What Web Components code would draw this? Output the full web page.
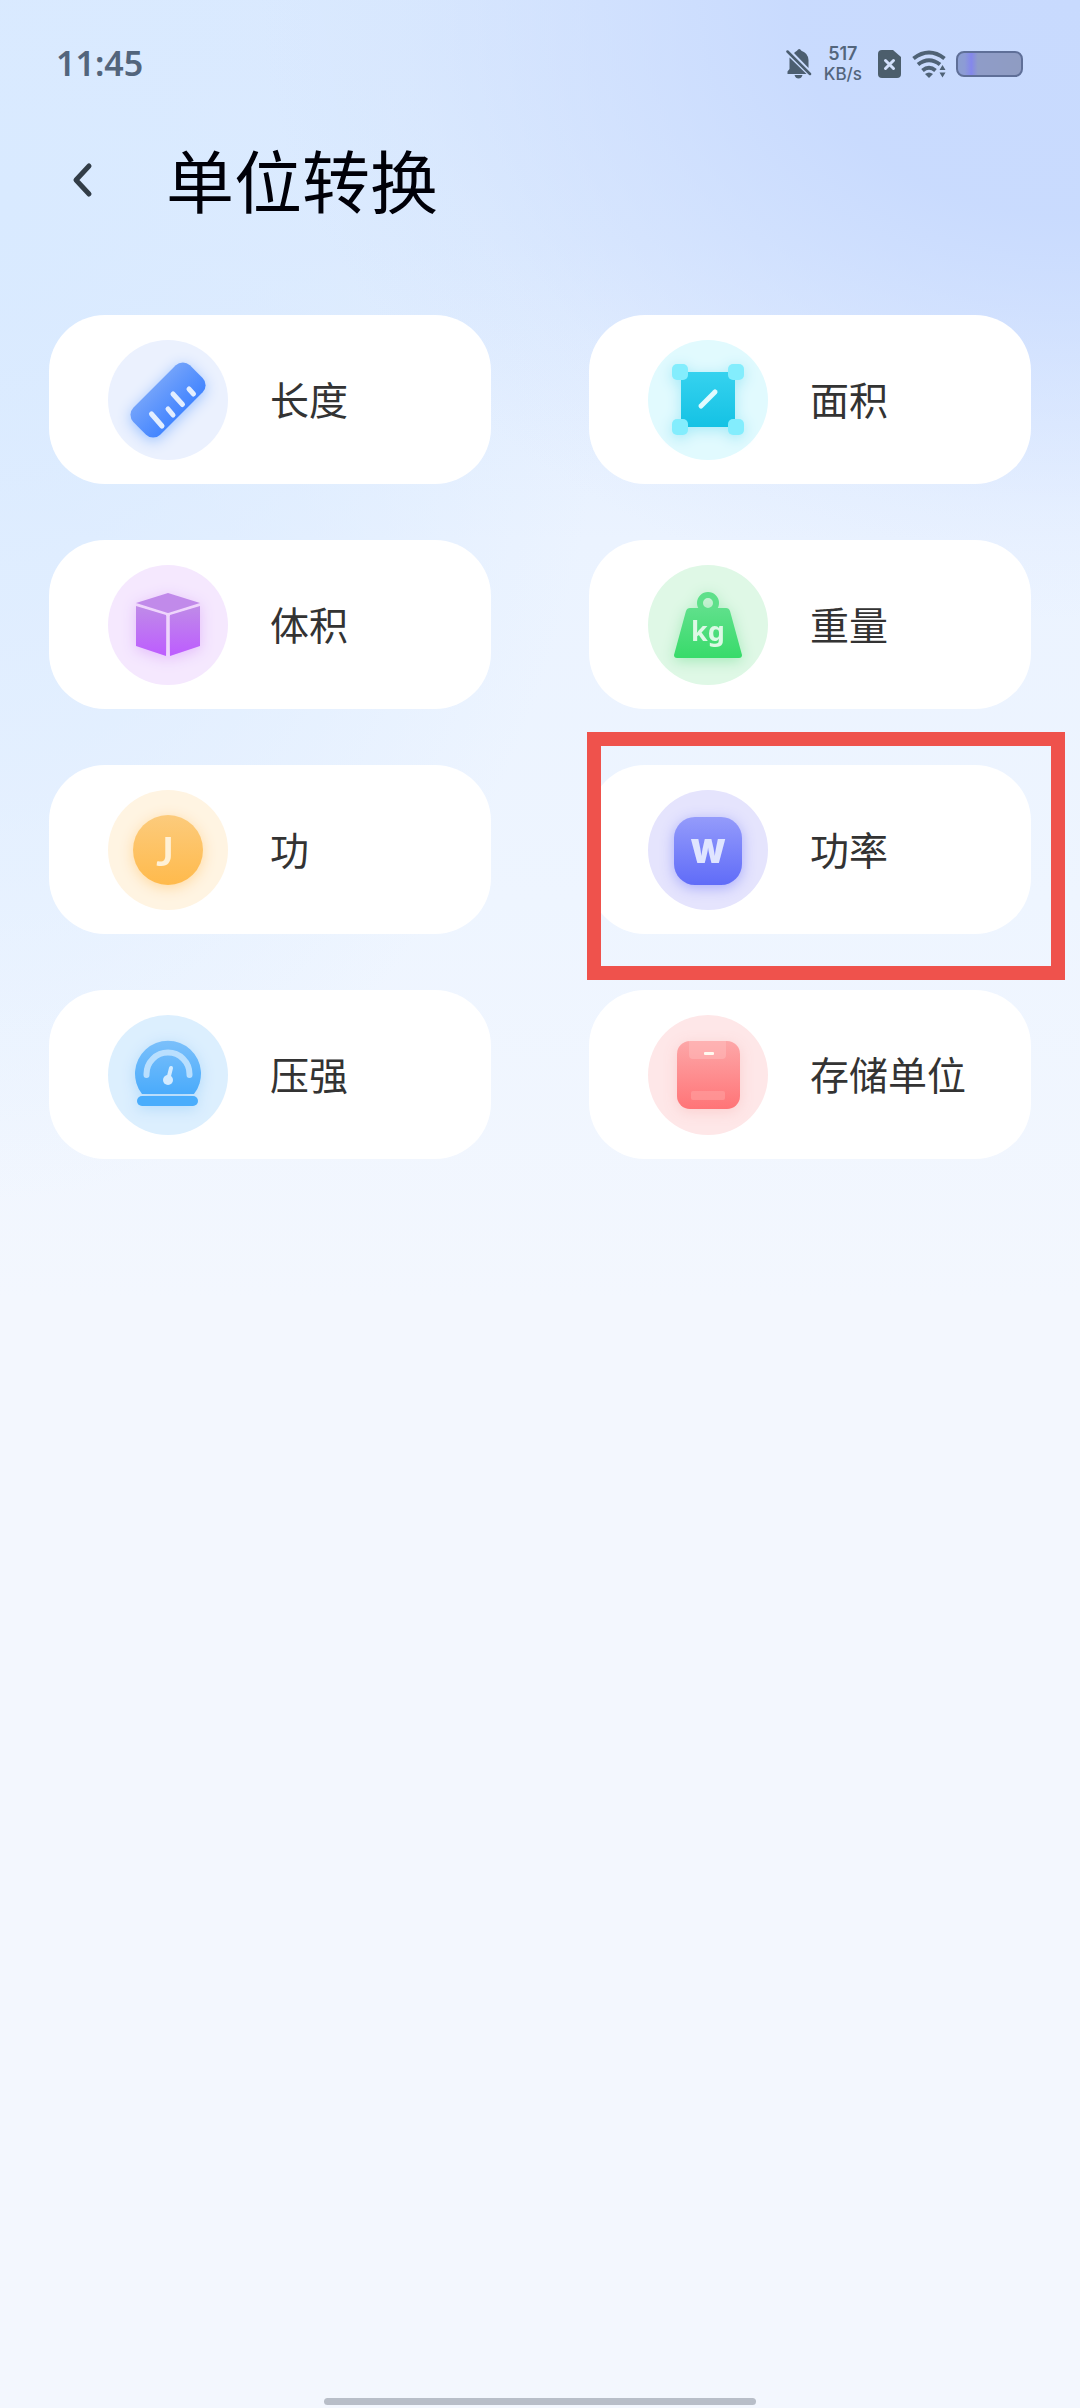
<!DOCTYPE html>
<html lang="zh-CN">
<head>
<meta charset="UTF-8">
<meta name="viewport" content="width=device-width, initial-scale=1">
<title>单位转换</title>
<style>
  html {
    height: 100%;
  }
  body {
    margin: 0;
    min-height: 100%;
    display: flex;
    font-family: "Noto Sans", "Noto Sans CJK SC", sans-serif;
    color: #333;
    background: #f3f7fe;
  }
</style>
</head>
<body>
<unit-page>
  <status-bar slot="status" time="11:45" speed="517" unit="KB/s"></status-bar>
  <page-header slot="header">单位转换</page-header>
  <unit-card icon="length" href="#length">长度</unit-card>
  <unit-card icon="area" href="#area">面积</unit-card>
  <unit-card icon="volume" href="#volume">体积</unit-card>
  <unit-card icon="weight" href="#weight">重量</unit-card>
  <unit-card icon="work" href="#work">功</unit-card>
  <unit-card icon="power" href="#power" marked>功率</unit-card>
  <unit-card icon="pressure" href="#pressure">压强</unit-card>
  <unit-card icon="storage" href="#storage">存储单位</unit-card>
</unit-page>

<script>
// Each icon is drawn in a 120x120 box: disc colour, shadow colour, gradient and shapes
const ICONS = {
  length: {
    disc: "#ebf1fe",
    shadow: "#9cc2ff",
    from: "#72a2fb",
    to: "#4385ff",
    shapes: `
      <rect x="20" y="41" width="80" height="38" rx="10" transform="rotate(-45 60 60)" fill="url(#g)"/>
      <path d="M43.500 74l10.500 12M60 69l5 6M65 54l9.500 10.500M81 49l4.500 5" fill="none" stroke="#e3eeff" stroke-width="5" stroke-linecap="round"/>`
  },
  area: {
    disc: "#e1fafe",
    shadow: "#a5e9f7",
    from: "#36d2ef",
    to: "#14c2e4",
    shapes: `
      <rect x="33" y="32" width="54" height="55" fill="url(#g)"/>
      <g fill="#83edfd">
        <rect x="24" y="24" width="16" height="16" rx="5"/>
        <rect x="80" y="24" width="16" height="16" rx="5"/>
        <rect x="24" y="79" width="16" height="16" rx="5"/>
        <rect x="80" y="79" width="16" height="16" rx="5"/>
      </g>
      <path d="M53 66l14-14" stroke="#e1fbff" stroke-width="5" stroke-linecap="round"/>`
  },
  volume: {
    disc: "#f5e8fe",
    shadow: "#e3bcfb",
    from: "#bf8be8",
    to: "#bd5cff",
    shapes: `
      <path d="M28 38l32 10 32-10v3l-31 10v40h-2V51L28 41z" fill="#efd5fc"/>
      <path d="M60 28l32 10-32 10-32-10z" fill="#c18aea"/>
      <path d="M28 41l30 9v41l-30-10z" fill="url(#g)"/>
      <path d="M92 41l-30 9v41l30-10z" fill="url(#g)"/>`
  },
  weight: {
    disc: "#dff8e6",
    shadow: "#a4e9b9",
    from: "#5fe08b",
    to: "#38db6a",
    shapes: `
      <circle cx="60" cy="38" r="8" fill="none" stroke="#5ee08a" stroke-width="6"/>
      <path d="M42 43h36q3 0 4 3l12 44q0 3-3 3H29q-3 0-3-3l12-44q1-3 4-3z" fill="url(#g)"/>
      <text x="60" y="76" font-family="Noto Sans, sans-serif" font-size="27" font-weight="700" text-anchor="middle" fill="#dcf9e5">kg</text>`
  },
  work: {
    disc: "#fff4e2",
    shadow: "#ffd9a0",
    from: "#fccb7c",
    to: "#ffba4c",
    shapes: `
      <circle cx="60" cy="60" r="35" fill="url(#g)"/>
      <text x="57" y="76" font-family="Lato, sans-serif" font-size="41" font-weight="700" text-anchor="middle" fill="#fff1d6">J</text>`
  },
  power: {
    disc: "#e5e4fd",
    shadow: "#a9acfb",
    from: "#949bfb",
    to: "#606cf8",
    shapes: `
      <rect x="26" y="27" width="68" height="68" rx="21" fill="url(#g)"/>
      <text x="60" y="73" font-family="Inter, sans-serif" font-size="33" font-weight="900" text-anchor="middle" fill="#e0e5ff">W</text>`
  },
  pressure: {
    disc: "#dceffe",
    shadow: "#b3dafb",
    from: "#7bc0fb",
    to: "#4aabfb",
    shapes: `
      <path d="M34 79a33 33 0 1 1 52 0z" fill="url(#g)"/>
      <rect x="29" y="81" width="61" height="10" rx="5" fill="#4aadfc"/>
      <path d="M38.500 60v-1a21.500 21.500 0 0 1 43 0v1" fill="none" stroke="#b9dffe" stroke-width="6" stroke-linecap="round"/>
      <path d="M63 53l-3 12" stroke="#d3ebff" stroke-width="4" stroke-linecap="round"/>
      <circle cx="60" cy="65" r="5" fill="#d3ebff"/>`
  },
  storage: {
    disc: "#fee7e8",
    shadow: "#fbcfcf",
    from: "#fda7a8",
    to: "#ff7477",
    shapes: `
      <rect x="29" y="26" width="63" height="68" rx="13" fill="url(#g)"/>
      <path d="M41 26h37v14q0 4-4 4H45q-4 0-4-4z" fill="#ffc0c0" fill-opacity=".45"/>
      <rect x="56" y="37" width="10" height="3" rx="1" fill="#fffaf0"/>
      <rect x="43" y="76" width="34" height="9" rx="2" fill="#ff9b9b" fill-opacity=".7"/>`
  }
};

class StatusBar extends HTMLElement {
  constructor() {
    super();
    this.attachShadow({ mode: "open" });
  }

  connectedCallback() {
    this.shadowRoot.innerHTML = `
      <style>
        :host {
          display: flex;
          align-items: center;
          justify-content: space-between;
          height: 128px;
          padding: 0 57px 0 56px;
          box-sizing: border-box;
          color: #53657c;
        }
        time {
          padding-bottom: 2px;
          font-size: 34px;
          font-weight: 600;
        }
        .tray {
          display: flex;
          align-items: center;
          gap: 10px;
        }
        .speed {
          display: grid;
          justify-items: center;
          font-family: Inter, sans-serif;
          font-size: 17px;
          line-height: 21px;
          font-weight: 500;
        }
        .speed b {
          font-size: 18px;
          font-weight: 600;
        }
        svg {
          display: block;
        }
      </style>
      <time>${this.getAttribute("time")}</time>
      <div class="tray">
        <svg width="28" height="30" viewBox="0 0 28 30" fill="#4c5e70">
          <path d="M8 4q1.500-1.500 3-2.200Q12 0 13.200 0t2.200 1.800Q22 4 22.500 11v8z"/>
          <path d="M3.500 8.500L20.500 25H1.500v-2.500l2-2.500z"/>
          <path d="M8.500 26h8q-1 3.500-4 3.500t-4-3.500z"/>
          <path d="M1.500 2.500l22.500 22.500" stroke="#4c5e70" stroke-width="2.500" stroke-linecap="round"/>
        </svg>
        <div class="speed">
          <b>${this.getAttribute("speed")}</b>
          <span>${this.getAttribute("unit")}</span>
        </div>
        <svg width="30" height="28" viewBox="0 0 30 28">
          <path d="M10 0h11l8 7v17q0 4-4 4H10q-4 0-4-4V4q0-4 4-4z" fill="#4c5e6c"/>
          <path d="M13.500 10.500l8 8M21.500 10.500l-8 8" stroke="#d3e0fb" stroke-width="3" stroke-linecap="round"/>
        </svg>
        <svg width="34" height="28" viewBox="0 0 34 28" fill="none" stroke="#4f6276" stroke-width="4">
          <path d="M1.500 8.500q15.500-12 31 0"/>
          <path d="M6 14.500q11-8.500 22 0"/>
          <path d="M10.500 20.500q6.500-5.500 13 0"/>
          <path d="M13 24q4-3 8 0l-4 4z" fill="#4f6276" stroke="none"/>
          <path d="M27.500 20l3-5 3 5zM27.500 22.500h6l-3 5z" fill="#4f6276" stroke="none"/>
        </svg>
        <svg width="67" height="26" viewBox="0 0 67 26">
          <defs>
            <linearGradient id="level">
              <stop offset="0" stop-color="#8c9fd0"/>
              <stop offset=".12" stop-color="#8c9bd6"/>
              <stop offset=".22" stop-color="#8487ec"/>
              <stop offset=".32" stop-color="#8f9cc8"/>
              <stop offset="1" stop-color="#8f9cc2"/>
            </linearGradient>
          </defs>
          <rect x="1" y="1" width="65" height="24" rx="7" fill="url(#level)" stroke="#5f6f98" stroke-width="2"/>
        </svg>
      </div>
    `;
  }
}

class PageHeader extends HTMLElement {
  constructor() {
    super();
    this.attachShadow({ mode: "open" });
  }

  connectedCallback() {
    this.shadowRoot.innerHTML = `
      <style>
        :host {
          display: flex;
          align-items: center;
          gap: 60px;
          height: 108px;
          padding: 0 58px;
        }
        button {
          width: 48px;
          height: 48px;
          padding: 0;
          border: none;
          background: none;
          cursor: pointer;
        }
        svg {
          display: block;
        }
        h1 {
          margin: 0;
          padding-bottom: 6px;
          font-family: "Noto Sans CJK SC", sans-serif;
          font-size: 68px;
          line-height: 100px;
          font-weight: 400;
          color: #000008;
        }
      </style>
      <button type="button" aria-label="返回">
        <svg width="48" height="48" viewBox="0 0 48 48" fill="none" stroke="#323d47" stroke-width="5" stroke-linecap="round" stroke-linejoin="round">
          <path d="M31 8L18 22l13 14"/>
        </svg>
      </button>
      <h1><slot></slot></h1>
    `;
  }
}

class UnitIcon extends HTMLElement {
  constructor() {
    super();
    this.attachShadow({ mode: "open" });
  }

  connectedCallback() {
    const icon = ICONS[this.getAttribute("name")];

    this.shadowRoot.innerHTML = `
      <style>
        :host {
          display: block;
          flex: none;
          width: 120px;
          height: 120px;
          border-radius: 50%;
          background: ${icon.disc};
        }
        svg {
          display: block;
        }
        .shape {
          filter: drop-shadow(0 3px 7px ${icon.shadow});
        }
      </style>
      <svg width="120" height="120" viewBox="0 0 120 120" aria-hidden="true">
        <defs>
          <linearGradient id="g" x1="0" y1="0" x2="0" y2="1">
            <stop offset="0" stop-color="${icon.from}"/>
            <stop offset="1" stop-color="${icon.to}"/>
          </linearGradient>
        </defs>
        <g class="shape">${icon.shapes}</g>
      </svg>
    `;
  }
}

class UnitCard extends HTMLElement {
  constructor() {
    super();
    this.attachShadow({ mode: "open" });
  }

  connectedCallback() {
    this.shadowRoot.innerHTML = `
      <style>
        :host {
          display: block;
          position: relative;
        }
        a {
          display: flex;
          align-items: center;
          gap: 42px;
          padding: 25px 0 24px 59px;
          border-radius: 56px;
          background: #fff;
          color: #333;
          font-family: "Noto Sans CJK SC", sans-serif;
          font-size: 39px;
          line-height: 58px;
          font-weight: 400;
          text-decoration: none;
          white-space: nowrap;
        }
        span {
          padding-bottom: 4px;
        }
        /* frame drawn over the marked card */
        :host([marked])::after {
          content: "";
          position: absolute;
          inset: -33px -34px -46px -2px;
          border: 14px solid #ef524c;
          pointer-events: none;
        }
      </style>
      <a href="${this.getAttribute("href")}">
        <unit-icon name="${this.getAttribute("icon")}"></unit-icon>
        <span><slot></slot></span>
      </a>
    `;
  }
}

class UnitPage extends HTMLElement {
  constructor() {
    super();
    this.attachShadow({ mode: "open" });
  }

  connectedCallback() {
    this.shadowRoot.innerHTML = `
      <style>
        :host {
          flex: 1;
          display: flex;
          flex-direction: column;
          background:
            radial-gradient(ellipse 820px 620px at 100% 0, #c8dafe 0, rgba(200, 218, 254, 0.95) 35%, rgba(200, 218, 254, 0.5) 60%, rgba(200, 218, 254, 0.15) 82%, rgba(200, 218, 254, 0) 100%),
            radial-gradient(ellipse 620px 1000px at 0 200px, #d9eaff 0, rgba(217, 234, 255, 0.5) 55%, rgba(217, 234, 255, 0) 100%),
            linear-gradient(#dbe9fe 0, #deebfe 240px, #ebf3ff 540px, #eef5ff 900px, #f3f7fe 1300px);
        }
        main {
          display: grid;
          grid-template-columns: 1fr 1fr;
          gap: 56px 98px;
          padding: 79px 49px;
        }
        .home {
          width: 40%;
          height: 7px;
          margin: auto auto 3px;
          border-radius: 4px;
          background: #b8bec8;
        }
      </style>
      <slot name="status"></slot>
      <slot name="header"></slot>
      <main><slot></slot></main>
      <div class="home"></div>
    `;
  }
}

customElements.define("status-bar", StatusBar);
customElements.define("page-header", PageHeader);
customElements.define("unit-icon", UnitIcon);
customElements.define("unit-card", UnitCard);
customElements.define("unit-page", UnitPage);
</script>
</body>
</html>
